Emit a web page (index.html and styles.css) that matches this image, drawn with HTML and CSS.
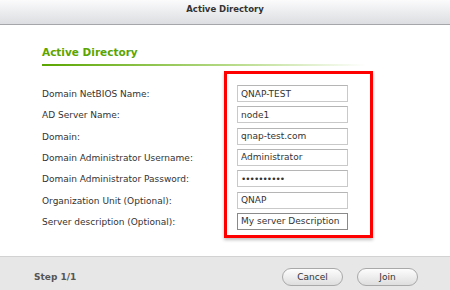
FILE: index.html
```html
<!DOCTYPE html>
<html lang="en">
<head>
  <meta charset="UTF-8" />
  <title>Active Directory</title>
  <link rel="stylesheet" href="styles.css">
</head>
<body>
  <div class="dialog">
    <div class="titlebar">Active Directory</div>

    <div class="content">
      <h2 class="section-title">Active Directory</h2>

      <div class="form">
        <div class="labels">
          <label>Domain NetBIOS Name:</label>
          <label>AD Server Name:</label>
          <label>Domain:</label>
          <label>Domain Administrator Username:</label>
          <label>Domain Administrator Password:</label>
          <label>Organization Unit (Optional):</label>
          <label>Server description (Optional):</label>
        </div>
        <div class="fields">
          <input type="text" value="QNAP-TEST">
          <input type="text" value="node1">
          <input type="text" value="qnap-test.com">
          <input type="text" value="Administrator">
          <input type="password" value="1234567890">
          <input type="text" value="QNAP">
          <input type="text" class="active" value="My server Description">
        </div>
      </div>
    </div>

    <div class="footer">
      <span class="step">Step 1/1</span>
      <div class="actions">
        <button>Cancel</button>
        <button>Join</button>
      </div>
    </div>
  </div>
</body>
</html>
```

FILE: styles.css
```css
* {
  box-sizing: border-box;
}

body {
  margin: 0;
  font-family: "DejaVu Sans", Verdana, sans-serif;
  background: #fff;
  color: #333;
}

.dialog {
  width: 450px;
  height: 290px;
  display: flex;
  flex-direction: column;
}

.titlebar {
  height: 25px;
  background: linear-gradient(#fbfbfc, #dcdee1);
  border-bottom: 1px solid #a4a6a9;
  text-align: center;
  font-size: 8.5px;
  font-weight: bold;
  color: #333;
  line-height: 18px;
}

.content {
  flex: 1;
  padding: 20px 0 0 42px;
}

.section-title {
  margin: 0;
  width: 323px;
  font-size: 10.5px;
  color: #5aa500;
  line-height: 14px;
  padding-bottom: 5px;
  border-bottom: 2px solid;
  border-image: linear-gradient(90deg, #5aa500, #b9dc8c 60%, rgba(255,255,255,0)) 1;
}

.form {
  display: flex;
  margin-top: 5px;
}

.labels {
  width: 182px;
  padding-top: 15px;
  display: flex;
  flex-direction: column;
  gap: 4.33px;
}

.labels label {
  height: 17px;
  line-height: 17px;
  font-size: 9px;
  color: #333;
}

.fields {
  width: 149px;
  height: 167px;
  border: 3px solid #f00;
  padding: 11px 0 0 10px;
  display: flex;
  flex-direction: column;
  gap: 4.33px;
  box-shadow: 0 2px 3px rgba(0,0,0,0.25);
}

.fields input {
  width: 111px;
  height: 17px;
  margin: 0;
  border: 1px solid #c9c9c9;
  border-top-color: #b5b5b5;
  padding: 0 3px;
  font-family: inherit;
  font-size: 9px;
  color: #333;
  background: #fff;
}

.fields input[type="password"] {
  letter-spacing: -1px;
}

.fields input.active {
  border-color: #8a8a8a;
}

.footer {
  height: 34px;
  background: #e7e7e7;
  border-top: 1px solid #d2d2d2;
  display: flex;
  align-items: center;
  justify-content: space-between;
  padding: 7px 32px 0 34px;
}

.step {
  font-size: 9px;
  font-weight: bold;
  color: #555;
}

.actions {
  display: flex;
  gap: 14px;
}

.actions button {
  width: 61px;
  height: 18px;
  border: 1px solid #a9a9a9;
  border-radius: 9px;
  background: linear-gradient(#fdfdfd, #dedede);
  font-family: inherit;
  font-size: 9px;
  color: #333;
  padding: 0;
}
```
